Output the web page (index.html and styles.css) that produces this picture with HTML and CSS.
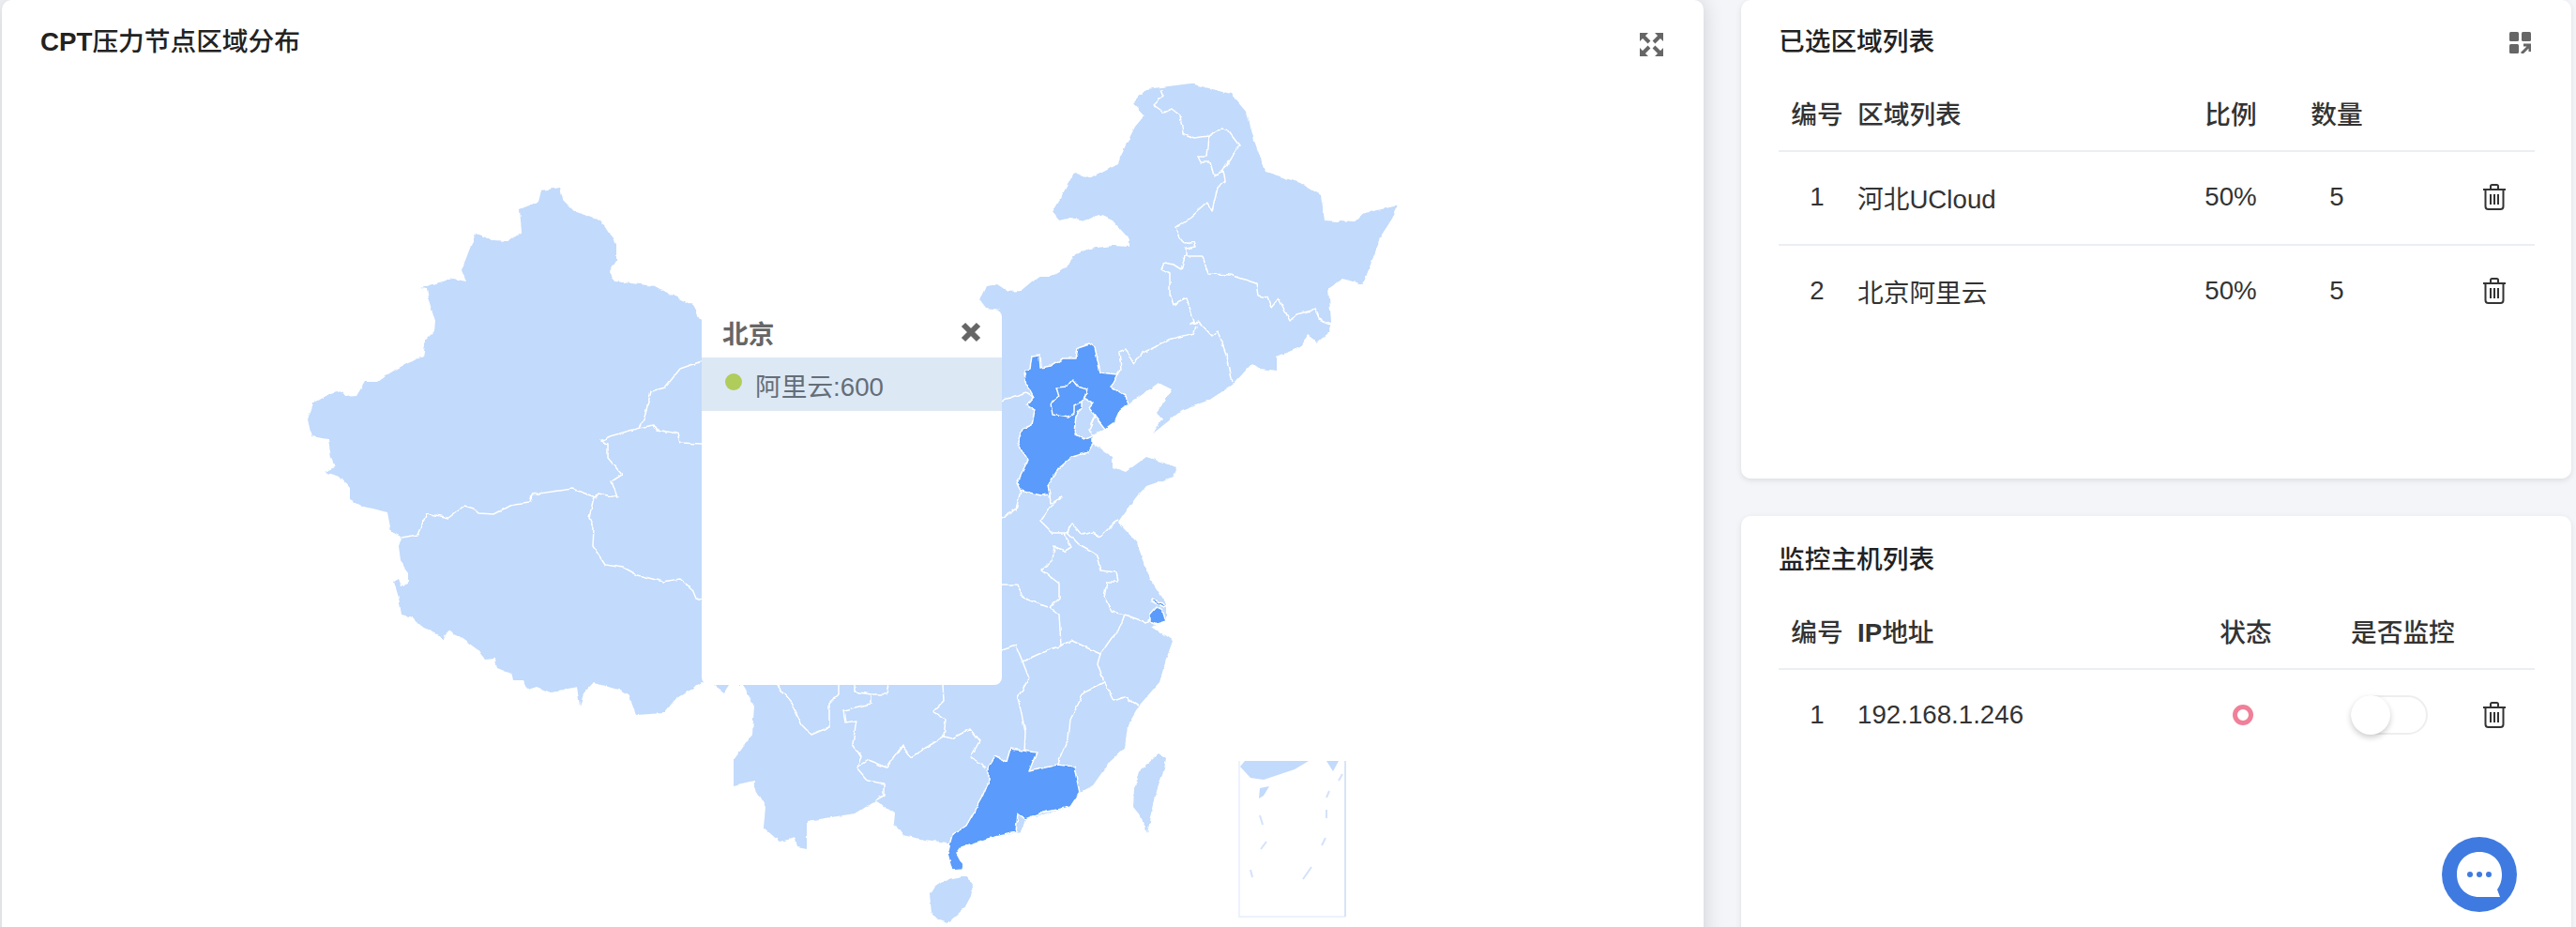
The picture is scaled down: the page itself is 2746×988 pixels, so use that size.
FILE: index.html
```html
<!DOCTYPE html>
<html lang="zh-CN">
<head>
<meta charset="utf-8">
<title>CPT压力节点区域分布</title>
<link rel="stylesheet" href="styles.css">
</head>
<body>
<div class="page">
  <section class="card map-card">
    <header class="map-head">
      <h2 class="card-title"><b class="latin">CPT</b>压力节点区域分布</h2>
      <svg class="icon-full" viewBox="0 0 25 25"><path class="full-head" d="M0 0H9L0 9ZM25 0H16L25 9ZM0 25H9L0 16ZM25 25H16L25 16Z"/><path class="full-tail" d="M3 3 10 10M22 3 15 10M3 22 10 15M22 22 15 15"/></svg>
    </header>
    <svg class="map" viewBox="2 0 1814 988">
      <defs>
        <filter id="rough" x="0" y="0" width="100%" height="100%" filterUnits="objectBoundingBox">
          <feTurbulence type="fractalNoise" baseFrequency="0.12" numOctaves="2" seed="4"/>
          <feDisplacementMap in="SourceGraphic" scale="4" xChannelSelector="R" yChannelSelector="G"/>
        </filter>
      </defs>
      <g class="rough">
      <path class="land" d="M328 447 334 430 351 420 364 417 368 423 380 422 389 407 403 407 415 398 434 387 451 380 454 362 463 353 464 343 458 323 455 308 448 307 482 297 497 300 492 288 507 249 526 256 541 257 556 248 554 223 574 215 577 203 597 200 600 213 612 225 639 235 646 242 657 260 657 278 650 290 656 300 698 305 717 315 738 325 748 343 1067 330 1051 328 1045 320 1052 305 1063 303 1075 311 1088 310 1106 295 1120 295 1137 285 1145 272 1161 265 1186 262 1204 263 1204 255 1186 235 1171 228 1157 235 1141 232 1129 235 1122 226 1131 210 1145 184 1163 190 1192 175 1194 167 1210 135 1220 123 1208 110 1222 95 1269 89 1312 100 1329 120 1337 150 1349 183 1386 195 1408 208 1412 235 1443 237 1455 227 1490 219 1484 233 1473 250 1453 303 1431 297 1416 307 1419 343 1416 355 1404 365 1394 357 1386 370 1361 380 1361 395 1343 393 1335 387 1314 410 1288 427 1259 438 1229 462 1239 447 1233 440 1249 415 1235 408 1214 423 1196 435 1178 457 1165 465 1161 470 1165 473 1186 487 1186 498 1200 503 1222 487 1255 498 1251 508 1222 518 1211 530 1192 557 1211 577 1226 617 1243 643 1243 663 1228 668 1250 683 1243 703 1236 727 1216 750 1202 773 1199 797 1182 813 1165 837 1151 845 1141 860 1093 873 1088 887 1049 895 1025 900 1010 898 986 895 962 890 953 877 954 867 933 853 911 867 874 873 860 875 860 905 850 903 848 893 831 897 814 882 816 860 804 840 804 832 782 837 782 810 802 783 804 753 794 733 792 730 777 730 772 738 761 730 748 727 720 745 708 760 678 762 670 740 660 735 633 728 622 740 618 752 615 732 587 738 572 732 563 735 558 725 547 725 545 718 530 712 528 702 517 703 510 693 488 677 477 672 472 682 468 677 450 668 440 658 428 655 425 637 420 620 425 617 428 625 435 622 435 612 427 597 425 582 428 573 417 567 413 546 388 540 373 532 373 520 362 508 345 503 357 498 353 488 350 468 332 465 Z"/>
      <path class="land" d="M1236 803 1243 808 1241 820 1233 843 1228 867 1223 887 1216 870 1208 860 1209 840 1216 820Z"/>
      <path class="land" d="M1025 935 1032 935 1037 943 1035 955 1028 968 1020 975 1010 984 1000 980 993 973 991 953 996 945 1003 940 1014 937Z"/>
      <path class="borders" d="M428 573 445 570 455 547 478 552 495 539 505 542 510 547 527 548 548 537 565 535 567 527 610 521 635 530 638 526 658 530 652 513 663 506 648 488 648 473 641 470 650 465 682 456 697 453 700 458 722 462 725 472 748 473M682 456 687 445 694 417 709 413 725 393 748 385M633 530 628 552 633 563 632 582 645 602 665 605 680 613 707 620 725 617 738 628 742 638 748 640"/>
      <path class="borders" d="M1237 95 1240 102 1230 112 1241 120 1249 116 1258 123 1261 142 1273 147 1288 145 1302 137 1308 138 1321 155 1308 175 1304 182 1306 193 1298 200 1292 225 1287 216 1269 232 1253 243 1257 253 1263 260 1273 257 1275 263 1264 265 1264 273 1282 273 1288 292 1312 293 1339 302 1341 315 1351 317 1355 328 1363 318 1375 342 1382 335 1402 330 1406 340 1419 345M1288 145 1286 167 1277 167 1280 173 1290 173 1294 187 1304 182M1263 273 1259 287 1251 282 1241 280 1238 287 1247 292 1247 313 1251 325 1265 318 1273 343 1269 345 1278 343 1292 358 1298 353 1308 380 1314 408M1275 347 1273 355 1245 362 1231 370 1216 377 1208 387 1200 372 1193 375 1195 393 1191 399M1068 427 1082 422 1094 418 1102 423"/>
      <path class="borders" d="M1068 552 1083 543 1088 523M1119 527 1120 537 1132 530 1117 543 1109 555 1122 568 1137 568 1143 558 1153 570 1165 567 1173 572 1188 557 1192 555M1134 568 1142 583 1134 588 1124 582 1122 597 1110 607 1129 622 1129 637 1119 647 1129 655 1131 688 1143 683 1173 697 1170 707 1177 727 1156 737 1148 753 1141 767 1139 787 1129 810 1128 815M1140 562 1138 568 1150 580 1163 587 1168 590 1173 608 1190 610 1192 620 1180 620 1177 637 1185 652 1199 655 1221 663 1226 660M1199 655 1192 673 1185 680 1173 697M1068 623 1085 623 1090 637 1117 647M1068 693 1083 688 1090 705 1112 695 1131 688M1090 705 1097 723 1085 743 1093 780 1092 802M1177 727 1187 747 1199 743 1214 752"/>
      <path class="borders" d="M1005 730 1006 747 995 758 1008 767 1006 785 1015 787 1034 777 1044 790 1035 807 1051 818M1006 785 971 807 962 795 945 818 925 810 913 818M894 730 894 740 884 750 884 775 865 783 855 773 843 747 828 730M911 730 911 737 928 740 945 740 947 730M928 740 928 750 899 757 901 770 913 768 909 793 918 807 913 818 925 832 942 835 942 848 933 853"/>
      <path class="hot" d="M1161 366 1149 370 1147 382 1133 382 1120 390 1109 392 1108 378 1100 379 1098 393 1092 395 1093 407 1102 423 1094 432 1103 437 1100 453 1090 457 1085 472 1095 490 1090 503 1084 515 1088 523 1110 528 1119 527 1117 518 1130 498 1143 487 1160 482 1165 473 1165 465 1161 457 1167 443 1178 457 1188 450 1194 437 1203 430 1200 422 1184 412 1191 399 1173 397 1167 370Z"/>
      <path class="land-edge" d="M1157 425 1165 430 1161 435 1167 443 1161 457 1165 465 1157 468 1145 462 1147 443 1153 435 1153 428Z"/>
      <path class="hot" d="M1143 405 1149 412 1159 415 1155 427 1145 432 1145 440 1139 445 1122 442 1120 430 1129 423 1126 413 1137 412Z"/>
      <path class="hot" d="M1054 817 1061 806 1073 812 1077 798 1105 802 1097 822 1127 815 1145 817 1151 845 1141 860 1111 866 1093 873 1085 867 1083 887 1049 895 1025 903 1020 910 1027 923 1026 927 1015 928 1010 910 1013 897 1015 890 1030 880 1047 850 1054 833Z"/>
      <path class="hot" d="M1233 647 1226 655 1226 663 1233 666 1243 663 1240 653Z"/>
      <path class="hot" d="M1228 638 1243 645 1240 647 1228 641Z"/>
      </g>
      <path class="inset-frame" d="M1321 811V977H1434"/>
      <path class="inset-side" d="M1434 811V977"/>
      <path class="land" d="M1327 811H1395L1380 820 1347 831 1333 829 1322 817Z"/>
      <path class="land" d="M1414 811H1427L1421 822ZM1343 840 1353 838 1347 848 1342 851Z"/>
      <path class="dashes" d="M1431 825 1427 832M1417 843 1414 850M1414 863V872M1343 869 1346 879M1413 893 1409 901M1350 897 1344 905M1398 924 1389 937M1333 927 1335 935"/>
    </svg>
    <aside class="tip">
      <div class="tip-head">
        <strong class="tip-title">北京</strong>
        <svg class="tip-close" viewBox="0 0 22 22"><path d="M3 3 19 19M19 3 3 19"/></svg>
      </div>
      <div class="tip-row"><i class="tip-dot"></i><span>阿里云:600</span></div>
    </aside>
  </section>

  <div class="side">
    <section class="card side-card">
      <header class="side-head">
        <h2 class="card-title">已选区域列表</h2>
        <svg class="icon-grid" viewBox="0 0 23 23"><rect width="10" height="10" rx="1.500"/><rect x="13" width="10" height="10" rx="1.500"/><rect y="13" width="10" height="10" rx="1.500"/><path d="M13 23 21 15M15 14H22V21" fill="none" stroke="#666" stroke-width="3"/></svg>
      </header>
      <div class="row row-head grid-area">
        <span class="center">编号</span><span class="name">区域列表</span><span class="center">比例</span><span class="center">数量</span><span></span>
      </div>
      <div class="row row-line grid-area">
        <span class="center">1</span><span class="name">河北UCloud</span><span class="center">50%</span><span class="center">5</span>
        <svg class="trash" viewBox="0 0 26 28"><path d="M1 6H25M9 6V2.500Q9 1 10.500 1H15.500Q17 1 17 2.500V6M3.500 6V24Q3.500 27 6.500 27H19.500Q22.500 27 22.500 24V6M9 11V22M13 11V22M17 11V22"/></svg>
      </div>
      <div class="row grid-area">
        <span class="center">2</span><span class="name">北京阿里云</span><span class="center">50%</span><span class="center">5</span>
        <svg class="trash" viewBox="0 0 26 28"><path d="M1 6H25M9 6V2.500Q9 1 10.500 1H15.500Q17 1 17 2.500V6M3.500 6V24Q3.500 27 6.500 27H19.500Q22.500 27 22.500 24V6M9 11V22M13 11V22M17 11V22"/></svg>
      </div>
    </section>

    <section class="card side-card side-card-hosts">
      <header class="side-head">
        <h2 class="card-title">监控主机列表</h2>
      </header>
      <div class="row row-head grid-hosts">
        <span class="center">编号</span><span class="name"><b class="latin">IP</b>地址</span><span class="center">状态</span><span class="watch">是否监控</span><span></span>
      </div>
      <div class="row grid-hosts">
        <span class="center">1</span><span class="name">192.168.1.246</span>
        <span class="center"><i class="ring"></i></span>
        <span class="watch"><i class="switch"><i class="knob"></i></i></span>
        <svg class="trash" viewBox="0 0 26 28"><path d="M1 6H25M9 6V2.500Q9 1 10.500 1H15.500Q17 1 17 2.500V6M3.500 6V24Q3.500 27 6.500 27H19.500Q22.500 27 22.500 24V6M9 11V22M13 11V22M17 11V22"/></svg>
      </div>
    </section>
  </div>

  <button class="chat" type="button" aria-label="chat">
    <svg viewBox="0 0 80 80"><path class="bubble" d="M40 16C26 16 16 26 16 40S26 64 40 64H62L59 56C62 52 64 47 64 40 64 26 54 16 40 16Z"/><circle class="bubble-dot" cx="30" cy="40" r="3"/><circle class="bubble-dot" cx="40" cy="40" r="3"/><circle class="bubble-dot" cx="50" cy="40" r="3"/></svg>
  </button>
</div>
</body>
</html>
```
FILE: styles.css
```css
* { box-sizing: border-box; }
html, body { margin: 0; height: 100%; }
body {
  background: #f3f5f9;
  font-family: "Liberation Sans", "Noto Sans CJK SC", sans-serif;
  font-size: 27.7px;
  color: #333;
  overflow: hidden;
}
.page {
  position: relative;
  display: flex;
  width: 2746px;
  height: 988px;
  padding-left: 2px;
  overflow: hidden;
}
.card {
  background: #fff;
  border-radius: 10px;
}
.card-title {
  margin: 0;
  font-size: 27.7px;
  font-weight: 500;
  line-height: 36px;
  color: #222;
}
.latin { font-weight: 700; }

.map-card {
  position: relative;
  flex: 0 0 1814px;
  height: 1040px;
  box-shadow: 0 0 22px rgba(0, 0, 0, .16);
  z-index: 1;
}
.map-head {
  position: relative;
  z-index: 2;
  display: flex;
  align-items: center;
  justify-content: space-between;
  height: 90px;
  padding: 0 43px 0 41px;
}
.icon-full { width: 25px; height: 25px; margin-top: 5px; }
.full-head { fill: #666; }
.full-tail { fill: none; stroke: #666; stroke-width: 4; }
.map { position: absolute; left: 0; top: 0; width: 1814px; height: 988px; }
.rough { filter: url(#rough); }
.land { fill: #c2dafb; }
.land-edge { fill: #c2dafb; stroke: #fff; stroke-width: 1.5; stroke-linejoin: round; }
.borders { fill: none; stroke: #fff; stroke-width: 1.5; stroke-linejoin: round; }
.hot { fill: #5a9bfb; stroke: #fff; stroke-width: 1.5; stroke-linejoin: round; }
.inset-frame { fill: none; stroke: #edf2fc; stroke-width: 2; }
.inset-side { fill: none; stroke: #d7e4f9; stroke-width: 2; }
.dashes { fill: none; stroke: #d4e2fa; stroke-width: 2; }

.tip {
  position: absolute;
  left: 746px;
  top: 330px;
  width: 320px;
  height: 400px;
  background: #fff;
  border-radius: 8px;
  color: #666;
}
.tip-head {
  display: flex;
  align-items: center;
  justify-content: space-between;
  height: 51px;
  padding: 0 22px 4px 22px;
}
.tip-title { font-size: 27.7px; font-weight: 700; }
.tip-close { width: 22px; height: 22px; fill: none; stroke: #666; stroke-width: 6; }
.tip-row {
  display: flex;
  align-items: center;
  gap: 14px;
  height: 57px;
  padding-left: 25px;
  background: #dde8f5;
  color: #646e78;
}
.tip-dot { width: 18px; height: 18px; border-radius: 50%; background: #b0cc5a; margin-top: -6px; }

.side {
  display: flex;
  flex-direction: column;
  gap: 40px;
  flex: 0 0 885px;
  margin-left: 40px;
}
.side-card {
  flex: 0 0 510px;
  padding: 0 39px 0 40px;
  box-shadow: 0 2px 6px rgba(0, 0, 0, .1);
}
.side-card-hosts { flex: 0 0 480px; padding-top: 2px; }
.side-head {
  display: flex;
  align-items: center;
  justify-content: space-between;
  height: 90px;
  padding-right: 4px;
}
.icon-grid { width: 23px; height: 23px; fill: #666; }
.row {
  display: grid;
  align-items: center;
  height: 98px;
  padding-bottom: 2px;
}
.grid-area { grid-template-columns: 82px 362px 76px 150px 136px; }
.grid-hosts { grid-template-columns: 82px 362px 108px 182px 72px; }
.row-head {
  height: 72px;
  padding-bottom: 10px;
  border-bottom: 2px solid #ebeef3;
  font-weight: 500;
}
.row-line { height: 100px; border-bottom: 2px solid #ebeef3; }
.center { text-align: center; }
.name { padding-left: 2px; }
.watch { padding-left: 58px; display: flex; align-items: center; white-space: nowrap; }
.trash {
  justify-self: end;
  width: 26px;
  height: 28px;
  margin-right: 30px;
  fill: none;
  stroke: #333;
  stroke-width: 2;
}
.ring {
  display: block;
  width: 22px;
  height: 22px;
  margin: 0 auto;
  position: relative;
  left: -3px;
  border: 5px solid #f0809a;
  border-radius: 50%;
}
.switch {
  display: block;
  position: relative;
  width: 82px;
  height: 42px;
  border: 2px solid #eee;
  border-radius: 21px;
}
.knob {
  position: absolute;
  left: -2px;
  top: -2px;
  width: 42px;
  height: 42px;
  border-radius: 50%;
  background: #fff;
  box-shadow: 0 3px 6px rgba(0, 0, 0, .2);
}
.chat {
  position: absolute;
  left: 2603px;
  top: 892px;
  width: 80px;
  height: 80px;
  padding: 0;
  border: 0;
  border-radius: 50%;
  background: #3f7ae0;
}
.chat svg { display: block; width: 80px; height: 80px; }
.bubble { fill: #fff; }
.bubble-dot { fill: #3f7ae0; }
```
